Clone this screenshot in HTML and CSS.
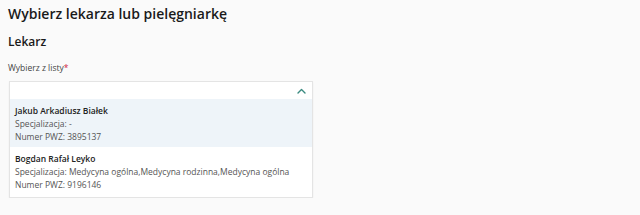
FILE: index.html
```html
<!DOCTYPE html>
<html lang="pl">
<head>
<meta charset="utf-8">
<link rel="stylesheet" href="styles.css">
</head>
<body>
<main class="page">
  <h1 class="title">Wybierz lekarza lub pielęgniarkę</h1>
  <h2 class="subtitle">Lekarz</h2>
  <label class="label">Wybierz z listy<span class="req">*</span></label>
  <div class="select">
    <div class="control">
      <svg class="chev" width="9" height="6" viewBox="0 0 9 6"><path d="M1 5 L4.5 1.5 L8 5" fill="none" stroke="#3a8a80" stroke-width="1.4" stroke-linecap="round" stroke-linejoin="round"/></svg>
    </div>
    <ul class="menu">
      <li class="option active">
        <div class="name">Jakub Arkadiusz Białek</div>
        <div class="meta">Specjalizacja: -</div>
        <div class="meta">Numer PWZ: 3895137</div>
      </li>
      <li class="option last">
        <div class="name">Bogdan Rafał Leyko</div>
        <div class="meta">Specjalizacja: Medycyna ogólna,Medycyna rodzinna,Medycyna ogólna</div>
        <div class="meta">Numer PWZ: 9196146</div>
      </li>
    </ul>
  </div>
</main>
</body>
</html>
```
FILE: styles.css
```css
html, body {
  margin: 0;
  padding: 0;
  background: #fafafa;
}
body {
  font-family: "Open Sans", "Noto Sans", sans-serif;
  color: #222;
}
.page {
  padding: 4px 8px 0 8px;
}
.title {
  margin: 0;
  font-size: 14px;
  font-weight: 600;
  line-height: 20px;
  color: #1a1a1a;
}
.subtitle {
  margin: 10px 0 0 0;
  font-size: 12px;
  font-weight: 600;
  line-height: 16px;
  color: #1a1a1a;
}
.label {
  display: block;
  margin-top: 12px;
  font-size: 8.5px;
  line-height: 12px;
  color: #444;
}
.req {
  color: #d0243a;
}
.select {
  width: 302px;
  margin-top: 7px;
  margin-left: 1px;
  background: #fff;
  border: 1px solid #e4e4e4;
  box-shadow: 0 1px 2px rgba(0,0,0,0.05);
}
.control {
  height: 17px;
  display: flex;
  align-items: center;
  justify-content: flex-end;
  padding-right: 6px;
}
.menu {
  list-style: none;
  margin: 0;
  padding: 0;
}
.option {
  padding: 5px 5px 4px 5px;
  font-size: 8.5px;
  line-height: 13px;
}
.option.last {
  padding-bottom: 6px;
}
.option.active {
  background: #eef4f9;
}
.name {
  font-weight: 600;
  color: #222;
}
.meta {
  color: #555;
}
```
